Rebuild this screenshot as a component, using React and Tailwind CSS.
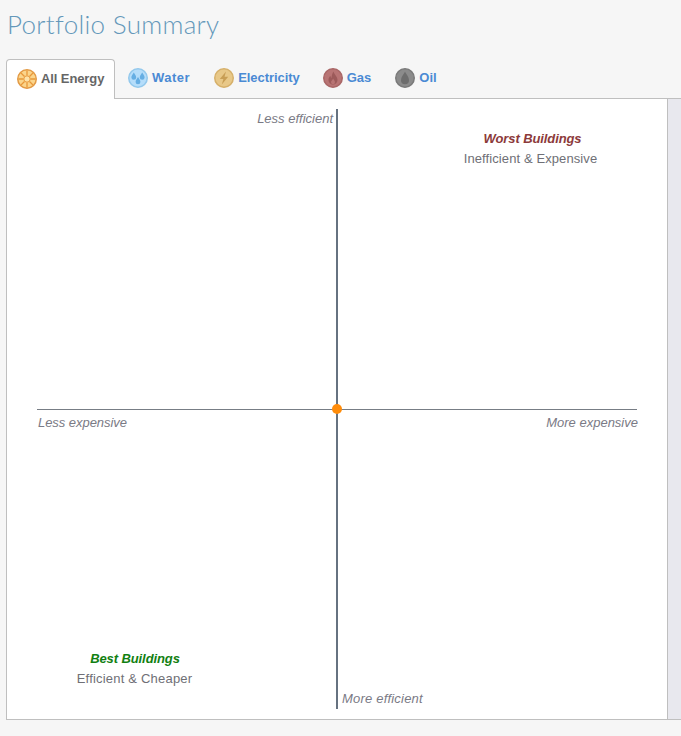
import React from "react";

const Badge = ({ bg, ring, children }) => (
  <svg width="20" height="20" viewBox="0 0 20 20" className="shrink-0">
    <circle cx="10" cy="10" r="9.25" fill={bg} stroke={ring} strokeWidth="1.5" />
    {children}
  </svg>
);

const EnergyIcon = () => (
  <Badge bg="#fbd58b" ring="#e39a45">
    <g stroke="#e8983a" strokeWidth="1.3">
      <path d="M10 1.5V6.5M10 13.5V18.5M1.5 10H6.5M13.5 10H18.5M4 4L7.5 7.5M12.5 12.5L16 16M16 4L12.5 7.5M7.5 12.5L4 16" />
    </g>
    <circle cx="10" cy="10" r="3.2" fill="#fde2a8" stroke="#e8983a" strokeWidth="1" />
  </Badge>
);
const Drop = ({ x, y, s = 1, fill }) => (
  <path transform={`translate(${x} ${y}) scale(${s})`} d="M0 -4C1.4 -1.8 2.4 -0.6 2.4 0.9A2.4 2.4 0 0 1 -2.4 0.9C-2.4 -0.6 -1.4 -1.8 0 -4Z" fill={fill} />
);
const WaterIcon = () => (
  <Badge bg="#b5ddfa" ring="#93c8ec">
    <Drop x={5.8} y={8.5} s={1} fill="#66aee3" />
    <Drop x={14.2} y={8.5} s={1} fill="#66aee3" />
    <Drop x={10} y={13} s={1} fill="#66aee3" />
  </Badge>
);
const BoltIcon = () => (
  <Badge bg="#e8c888" ring="#d6b06a">
    <path d="M12 3.5L5.8 11H9.4L7.8 16.5L14.2 8.8H10.5Z" fill="#c89e55" />
  </Badge>
);
const GasIcon = () => (
  <Badge bg="#b87474" ring="#a96666">
    <path d="M10.5 3.5C11 6.5 14.5 8.5 14.5 12A4.5 4.5 0 0 1 5.5 12C5.5 10 6.6 8.8 7.4 7.8C7.6 9 8 9.6 8.7 10C8.6 7.8 9.2 5.4 10.5 3.5Z" fill="#9c5a5a" />
    <path d="M10.2 10.5C10.5 12 12 12.6 12 14.2A2 2 0 0 1 8 14.2C8 12.8 9.6 12 10.2 10.5Z" fill="#b87474" />
  </Badge>
);
const OilIcon = () => (
  <Badge bg="#8b8b8b" ring="#7a7a7a">
    <path d="M10 3.8C11.8 7 14 9.4 14 12.2A4 4 0 0 1 6 12.2C6 9.4 8.2 7 10 3.8Z" fill="#6d6d6d" />
  </Badge>
);

const tabs = [
  { label: "Water", Icon: WaterIcon, cls: "ml-[13px]", text: "tracking-[0.5px]" },
  { label: "Electricity", Icon: BoltIcon, cls: "ml-[24px]", text: "tracking-[-0.05px]" },
  { label: "Gas", Icon: GasIcon, cls: "ml-[23px]", text: "" },
  { label: "Oil", Icon: OilIcon, cls: "ml-[24px]", text: "" },
];

export default function App() {
  return (
    <div className="w-[681px] h-[736px] bg-[#f6f6f6] overflow-hidden font-['Liberation_Sans',Arial,sans-serif] text-[13px]">
      <h1 className="h-[59px] pl-[7px] pt-[7px] font-['Lato',sans-serif] font-light text-[26px] leading-[34px] text-[#6498ba] tracking-[0.3px]">
        Portfolio Summary
      </h1>

      <div className="ml-[6px] h-[40px] flex items-center relative">
        <div className="h-[40px] w-[109px] flex items-center gap-[4px] pl-[10px] pb-[2px] bg-white border border-b-0 border-[#bfbfbf] rounded-t-[4px] relative z-10 font-bold text-[#666666] tracking-[-0.1px]">
          <EnergyIcon />
          <span>All Energy</span>
        </div>
        {tabs.map(({ label, Icon, cls, text }) => (
          <div key={label} className={`flex items-center gap-[4px] pb-[2px] font-bold text-[#4a8ad4] ${cls}`}>
            <Icon />
            <span className={text}>{label}</span>
          </div>
        ))}
      </div>

      <div className="ml-[6px] h-[622px] -mt-px flex border-y border-l border-[#bfbfbf]">
        <div className="w-[661px] h-full bg-white border-r border-[#bfbfbf] pl-[30px] pt-[10px]">
          <div className="relative w-[600px] h-[600px] grid grid-cols-2 grid-rows-[301px_299px] text-[#7a7a85]">
            <div className="border-r border-b border-r-[#667280] border-b-[#777d85] flex flex-col items-end pr-[3px] pt-[1px]">
              <i className="leading-[18px]">Less efficient</i>
            </div>
            <div className="border-l border-b border-l-[#667280] border-b-[#777d85] pl-[86px] pt-[20px] flex flex-col items-center w-[300px]">
              <b className="italic text-[#8c3a3a] leading-[20px] tracking-[-0.1px] ml-[4px]">Worst Buildings</b>
              <span className="text-[#6f6f76] leading-[20px] tracking-[0.1px]">Inefficient &amp; Expensive</span>
            </div>
            <div className="border-r border-[#667280] flex flex-col justify-between">
              <i className="leading-[18px] pt-[4px] h-[22px] pl-[1px] tracking-[-0.05px]">Less expensive</i>
              <div className="flex flex-col items-center w-[195px] pb-[20px]">
                <b className="italic text-[#118011] leading-[20px] tracking-[-0.1px] ml-[1px]">Best Buildings</b>
                <span className="text-[#6f6f76] leading-[20px] tracking-[0.2px]">Efficient &amp; Cheaper</span>
              </div>
            </div>
            <div className="border-l border-[#667280] flex flex-col justify-between pb-[1px]">
              <i className="self-end leading-[18px] pt-[4px] h-[22px] -mr-px">More expensive</i>
              <i className="leading-[18px] pl-[4px] tracking-[0.2px]">More efficient</i>
            </div>
            <div className="absolute left-[295px] top-[295px] w-[10px] h-[10px] rounded-full bg-[#ff8c0a]" />
          </div>
        </div>
        <div className="flex-1 bg-[#e8e8ee]" />
      </div>
    </div>
  );
}
